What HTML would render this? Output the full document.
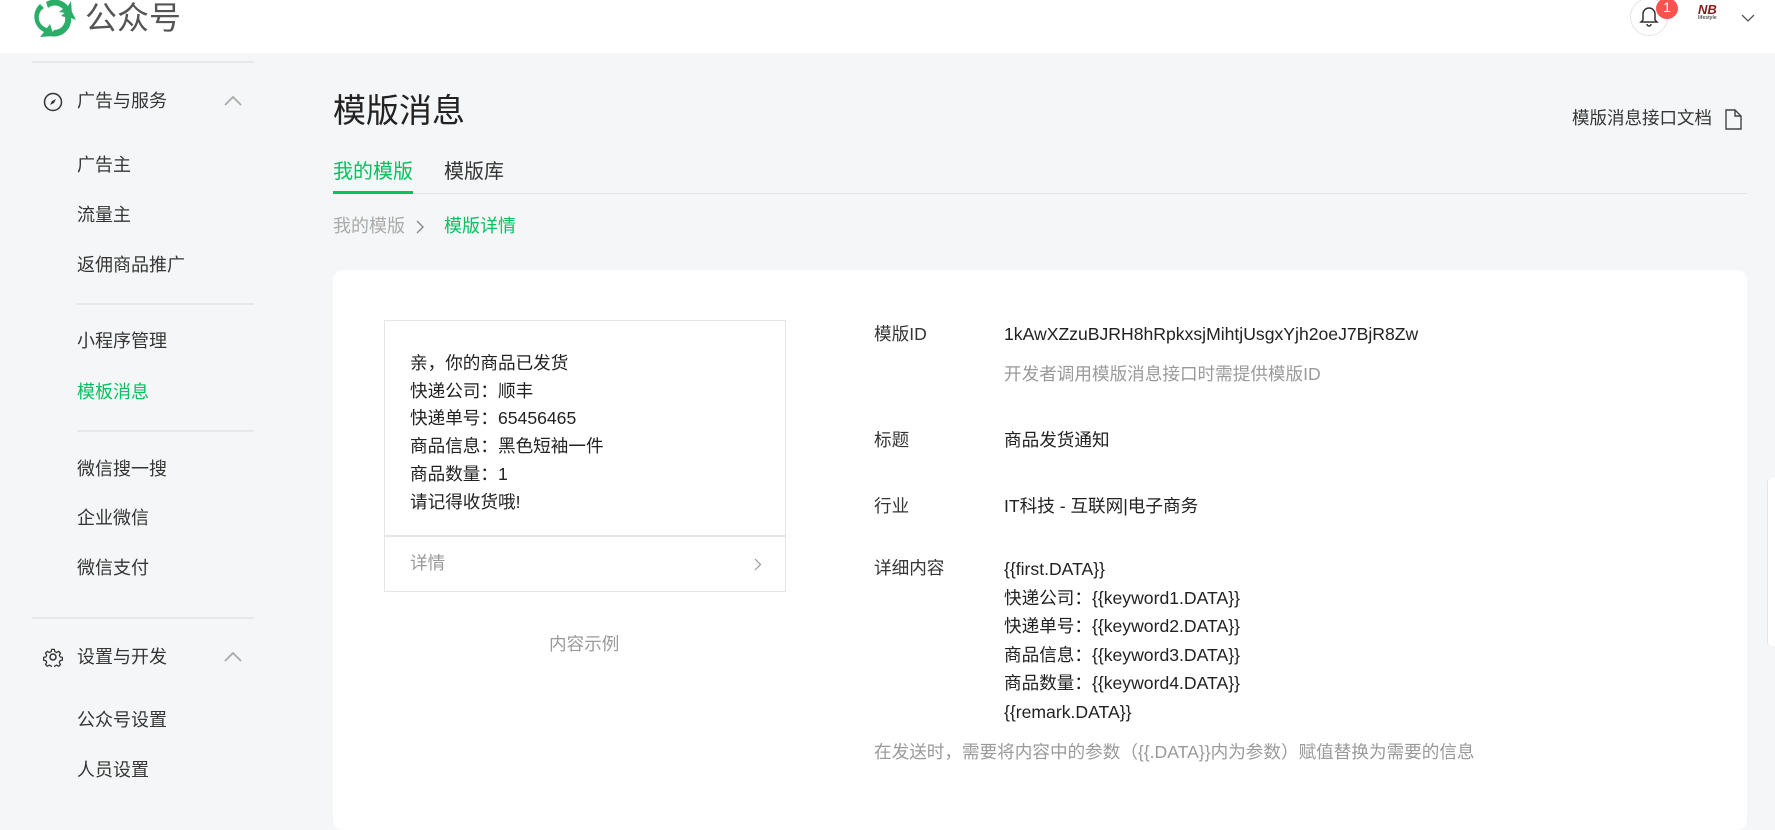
<!DOCTYPE html>
<html><head><meta charset="utf-8"><style>
*{margin:0;padding:0;box-sizing:border-box}
body{width:1775px;height:808px;overflow:hidden;background:#f5f6f7;font-family:"Liberation Sans","Noto Sans CJK SC",sans-serif;color:#353535;position:relative}
.a{position:absolute;white-space:nowrap;line-height:1}
.hdr{position:absolute;left:0;top:0;width:1775px;height:53px;background:#fff}
.sep{position:absolute;height:2px;background:#e7e8ea}
.nav{font-size:18px;color:#353535}
.g{color:#07c160}
.gr{color:#9a9a9a}
.card{position:absolute;left:333px;top:270px;width:1414px;height:560px;background:#fff;border-radius:10px}
.f{font-size:17.6px}
</style></head><body>
<div class="hdr"></div>
<svg class="a" style="left:30px;top:-4px" width="48" height="44" viewBox="0 0 48 44">
<path d="M10 8 A17 17 0 0 0 14 36 L10 41 L24 40 L20 28 L17 32 A11 11 0 0 1 14 12 Z" fill="#2aae67"/>
<path d="M20 40 A17 17 0 0 0 41 22 L46 24 L40 12 L31 20 L35 21 A11 11 0 0 1 24 34 Z" fill="#2aae67"/>
<path d="M16 6 A17 17 0 0 1 38 10 L41 5 L42 18 L29 16 L33 13 A11 11 0 0 0 18 12 Z" fill="#2aae67"/>
</svg>
<div class="a" style="left:85px;top:2px;font-size:32px;color:#555">公众号</div>
<div class="a" style="left:1630px;top:-2px;width:38px;height:38px;border:1px solid #e5e5e5;border-radius:50%"></div>
<svg class="a" style="left:1639px;top:5px" width="20" height="22" viewBox="0 0 20 22"><path d="M4 15 V9 A6 6 0 0 1 16 9 V15 L18 17 H2 Z M8 19 A2 2 0 0 0 12 19" fill="none" stroke="#333" stroke-width="1.5"/></svg>
<div class="a" style="left:1656px;top:-2px;width:22px;height:21px;border-radius:50%;background:#fa5151;color:#fff;font-size:14px;text-align:center;line-height:19px">1</div>
<div class="a" style="left:1698px;top:3px;width:32px;height:32px;font-size:13px;color:#8a1a1a;font-style:italic;font-weight:bold">NB<div style="font-size:5px;color:#555;font-style:normal">lifestyle</div></div>
<svg class="a" style="left:1741px;top:14px" width="14" height="9" viewBox="0 0 14 9"><path d="M1 1 L7 7 L13 1" fill="none" stroke="#555" stroke-width="1.3"/></svg>

<div class="sep" style="left:32px;top:61px;width:222px"></div>
<svg class="a" style="left:43px;top:92px" width="20" height="20" viewBox="0 0 20 20"><circle cx="10" cy="10" r="8.5" fill="none" stroke="#333" stroke-width="1.5"/><path d="M13 7 L11 11 L7 13 L9 9 Z" fill="#333"/></svg>
<div class="a nav" style="left:77px;top:92px">广告与服务</div>
<svg class="a" style="left:224px;top:96px" width="18" height="10" viewBox="0 0 18 10"><path d="M1 9 L9 1 L17 9" fill="none" stroke="#aaa" stroke-width="1.8"/></svg>
<div class="a nav" style="left:77px;top:156px">广告主</div>
<div class="a nav" style="left:77px;top:206px">流量主</div>
<div class="a nav" style="left:77px;top:256px">返佣商品推广</div>
<div class="sep" style="left:77px;top:303px;width:177px"></div>
<div class="a nav" style="left:77px;top:332px">小程序管理</div>
<div class="a nav g" style="left:77px;top:383px">模板消息</div>
<div class="sep" style="left:77px;top:430px;width:177px"></div>
<div class="a nav" style="left:77px;top:460px">微信搜一搜</div>
<div class="a nav" style="left:77px;top:509px">企业微信</div>
<div class="a nav" style="left:77px;top:559px">微信支付</div>
<div class="sep" style="left:32px;top:617px;width:222px"></div>
<svg class="a" style="left:43px;top:647px" width="20" height="20" viewBox="0 0 20 20"><circle cx="10" cy="10" r="3" fill="none" stroke="#333" stroke-width="1.5"/><path d="M8.5 1.5h3l.5 2.5 2 1 2.3-1.3 2 2-1.3 2.3 1 2 2.5.5v3l-2.5.5-1 2 1.3 2.3-2 2-2.3-1.3-2 1-.5 2.5h-3l-.5-2.5-2-1-2.3 1.3-2-2 1.3-2.3-1-2-2.5-.5v-3l2.5-.5 1-2-1.3-2.3 2-2 2.3 1.3 2-1z" transform="scale(.9) translate(1.1 1.1)" fill="none" stroke="#333" stroke-width="1.4"/></svg>
<div class="a nav" style="left:77px;top:648px">设置与开发</div>
<svg class="a" style="left:224px;top:652px" width="18" height="10" viewBox="0 0 18 10"><path d="M1 9 L9 1 L17 9" fill="none" stroke="#aaa" stroke-width="1.8"/></svg>
<div class="a nav" style="left:77px;top:711px">公众号设置</div>
<div class="a nav" style="left:77px;top:761px">人员设置</div>

<div class="a" style="left:333px;top:94px;font-size:33px;color:#222">模版消息</div>
<div class="a" style="left:1572px;top:110px;font-size:17.5px;color:#353535">模版消息接口文档</div>
<svg class="a" style="left:1725px;top:109px" width="17" height="21" viewBox="0 0 17 21"><path d="M1 1 H10 L16 7 V20 H1 Z M10 1 V7 H16" fill="none" stroke="#444" stroke-width="1.4"/></svg>
<div class="a g" style="left:333px;top:162px;font-size:20px">我的模版</div>
<div class="a" style="left:444px;top:162px;font-size:20px;color:#353535">模版库</div>
<div class="a" style="left:333px;top:193px;width:1414px;height:1px;background:#e3e4e6"></div>
<div class="a" style="left:333px;top:191px;width:80px;height:3px;background:#07c160"></div>
<div class="a gr" style="left:333px;top:217px;font-size:18px;color:#aaa">我的模版</div>
<svg class="a" style="left:416px;top:220px" width="9" height="14" viewBox="0 0 9 14"><path d="M1 1 L7 7 L1 13" fill="none" stroke="#888" stroke-width="1.4"/></svg>
<div class="a g" style="left:444px;top:217px;font-size:18px">模版详情</div>

<div class="card"></div>
<div class="a" style="left:384px;top:320px;width:402px;height:272px;border:1.5px solid #e5e6e8"></div>
<div class="a" style="left:384px;top:535px;width:402px;height:1.5px;background:#e5e6e8"></div>
<div class="a f" style="left:410px;top:350px;line-height:27.7px;color:#222">亲，你的商品已发货<br>快递公司：顺丰<br>快递单号：65456465<br>商品信息：黑色短袖一件<br>商品数量：1<br>请记得收货哦!</div>
<div class="a f gr" style="left:410px;top:555px">详情</div>
<svg class="a" style="left:754px;top:558px" width="8" height="13" viewBox="0 0 8 13"><path d="M1 1 L6.5 6.5 L1 12" fill="none" stroke="#999" stroke-width="1.2"/></svg>
<div class="a f gr" style="left:549px;top:636px">内容示例</div>

<div class="a f" style="left:874px;top:326px">模版ID</div>
<div class="a f" style="left:1004px;top:326px;color:#222">1kAwXZzuBJRH8hRpkxsjMihtjUsgxYjh2oeJ7BjR8Zw</div>
<div class="a f gr" style="left:1004px;top:366px">开发者调用模版消息接口时需提供模版ID</div>
<div class="a f" style="left:874px;top:432px">标题</div>
<div class="a f" style="left:1004px;top:432px;color:#222">商品发货通知</div>
<div class="a f" style="left:874px;top:498px">行业</div>
<div class="a f" style="left:1004px;top:498px;color:#222">IT科技 - 互联网|电子商务</div>
<div class="a f" style="left:874px;top:560px">详细内容</div>
<div class="a f" style="left:1004px;top:555px;line-height:28.6px;color:#222">{{first.DATA}}<br>快递公司：{{keyword1.DATA}}<br>快递单号：{{keyword2.DATA}}<br>商品信息：{{keyword3.DATA}}<br>商品数量：{{keyword4.DATA}}<br>{{remark.DATA}}</div>
<div class="a f gr" style="left:874px;top:744px">在发送时，需要将内容中的参数（{{.DATA}}内为参数）赋值替换为需要的信息</div>
<div class="a" style="left:1767px;top:478px;width:8px;height:168px;background:#fff;border-left:1px solid #e5e5e5;border-radius:4px 0 0 4px"></div>
</body></html>
